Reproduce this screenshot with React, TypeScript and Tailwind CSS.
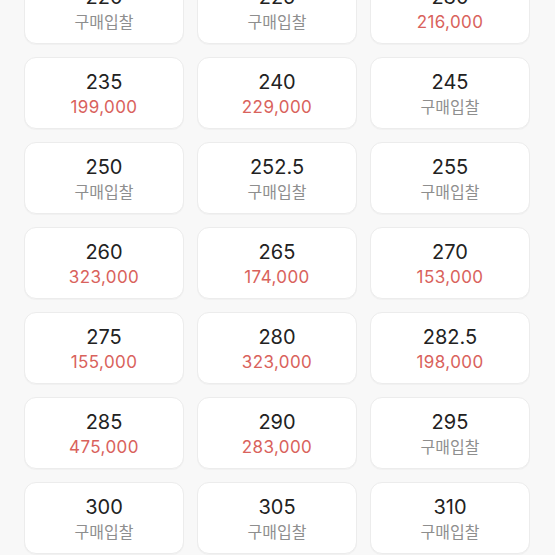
import React from "react";

type Item = { size: string; price?: string };

const items: Item[] = [
  { size: "220" },
  { size: "225" },
  { size: "230", price: "216,000" },
  { size: "235", price: "199,000" },
  { size: "240", price: "229,000" },
  { size: "245" },
  { size: "250" },
  { size: "252.5" },
  { size: "255" },
  { size: "260", price: "323,000" },
  { size: "265", price: "174,000" },
  { size: "270", price: "153,000" },
  { size: "275", price: "155,000" },
  { size: "280", price: "323,000" },
  { size: "282.5", price: "198,000" },
  { size: "285", price: "475,000" },
  { size: "290", price: "283,000" },
  { size: "295" },
  { size: "300" },
  { size: "305" },
  { size: "310" },
];

export default function App() {
  return (
    <div
      className="w-[555px] h-[555px] overflow-hidden bg-[#f8f8f8]"
      style={{ fontFamily: '"Inter", "Noto Sans CJK KR", sans-serif' }}
    >
      <div className="grid grid-cols-[160px_160px_160px] gap-x-[13px] gap-y-[13px] pl-[24px] -mt-[28px]">
        {items.map((it) => (
          <div
            key={it.size}
            className="h-[72px] rounded-[12px] bg-white border border-[#ececec] shadow-[0_1px_1px_rgba(0,0,0,0.03)] flex flex-col items-center pt-[11px]"
          >
            <div className="text-[20px] leading-[26px] text-[#222222]">{it.size}</div>
            {it.price ? (
              <div className="text-[17px] leading-[24px] tracking-[0.4px] text-[#d9625c]">{it.price}</div>
            ) : (
              <div className="text-[16px] leading-[24px] text-[#8e8e8e]">구매입찰</div>
            )}
          </div>
        ))}
      </div>
    </div>
  );
}
